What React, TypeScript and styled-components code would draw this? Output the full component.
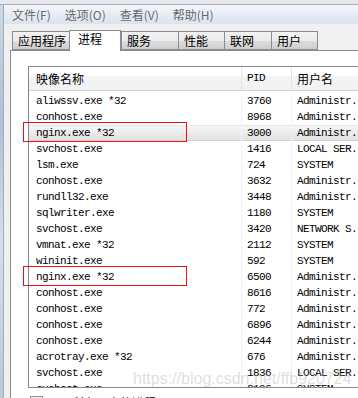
import React from "react";
import styled, { createGlobalStyle } from "styled-components";

interface IProcess {
  name: string;
  pid: string;
  user: string;
  selected?: boolean;
}

const processes: IProcess[] = [
  { name: "aliwssv.exe *32", pid: "3760", user: "Administr." },
  { name: "conhost.exe", pid: "8968", user: "Administr." },
  { name: "nginx.exe *32", pid: "3000", user: "Administr.", selected: true },
  { name: "svchost.exe", pid: "1416", user: "LOCAL SER." },
  { name: "lsm.exe", pid: "724", user: "SYSTEM" },
  { name: "conhost.exe", pid: "3632", user: "Administr." },
  { name: "rundll32.exe", pid: "3448", user: "Administr." },
  { name: "sqlwriter.exe", pid: "1180", user: "SYSTEM" },
  { name: "svchost.exe", pid: "3420", user: "NETWORK S." },
  { name: "vmnat.exe *32", pid: "2112", user: "SYSTEM" },
  { name: "wininit.exe", pid: "592", user: "SYSTEM" },
  { name: "nginx.exe *32", pid: "6500", user: "Administr." },
  { name: "conhost.exe", pid: "8616", user: "Administr." },
  { name: "conhost.exe", pid: "772", user: "Administr." },
  { name: "conhost.exe", pid: "6896", user: "Administr." },
  { name: "conhost.exe", pid: "6244", user: "Administr." },
  { name: "acrotray.exe *32", pid: "676", user: "Administr." },
  { name: "svchost.exe", pid: "1836", user: "LOCAL SER." },
  { name: "svchost.exe", pid: "2196", user: "SYSTEM" },
];

const tabs = [
  { label: "应用程序", width: 58 },
  { label: "进程", width: 52, active: true },
  { label: "服务", width: 58 },
  { label: "性能", width: 47 },
  { label: "联网", width: 48 },
  { label: "用户", width: 47 },
];

const menus = ["文件(F)", "选项(O)", "查看(V)", "帮助(H)"];

const GlobalStyle = createGlobalStyle`
  html, body {
    margin: 0;
    padding: 0;
    overflow: hidden;
    background: #f0f0f0;
  }
`;

const Window = styled.div`
  position: relative;
  width: 358px;
  height: 398px;
  overflow: hidden;
  display: flex;
  flex-direction: column;
  font-family: "Noto Sans CJK SC", "Liberation Sans", sans-serif;
`;

const TopStrip = styled.div`
  height: 4px;
  flex-shrink: 0;
  background: #e6e8eb;
  border-bottom: 1px solid #a9adb3;
`;

const Body = styled.div`
  flex: 1;
  display: flex;
  flex-direction: row;
  min-height: 0;
`;

const Frame = styled.div`
  width: 3px;
  flex-shrink: 0;
  background: linear-gradient(180deg, #cbd8e8 0%, #aebfd6 30%, #d5dfec 60%, #b9c8dc 100%);
  border-right: 1px solid #a7abb0;
`;

const Content = styled.div`
  flex: 1;
  display: flex;
  flex-direction: column;
  background: #f0f0f0;
  min-width: 0;
`;

const MenuBar = styled.div`
  height: 19px;
  flex-shrink: 0;
  display: flex;
  align-items: center;
  padding-left: 1px;
  background: linear-gradient(180deg, #f4f7fb 0%, #e6ecf5 50%, #dbe3ef 100%);
`;

const MenuItem = styled.span`
  padding: 0 7px;
  font-size: 12px;
  line-height: 19px;
  color: #6a6a6a;
`;

const TabRow = styled.div`
  display: flex;
  align-items: flex-end;
  height: 21px;
  margin-top: 5px;
  padding-left: 8px;
  position: relative;
  z-index: 1;
`;

const Tab = styled.div<{ $active?: boolean; $width: number }>`
  box-sizing: border-box;
  width: ${(p) => p.$width}px;
  height: ${(p) => (p.$active ? 21 : 19)}px;
  margin-bottom: ${(p) => (p.$active ? -1 : 0)}px;
  margin-right: ${(p) => (p.$active ? 0 : -1)}px;
  padding-left: ${(p) => (p.$active ? 8 : 5)}px;
  border: 1px solid #898c95;
  border-bottom: ${(p) => (p.$active ? "none" : "1px solid #898c95")};
  background: ${(p) =>
    p.$active ? "#ffffff" : "linear-gradient(180deg, #f2f2f2 0%, #ebebeb 50%, #dddddd 51%, #cfcfcf 100%)"};
  font-size: 12px;
  line-height: ${(p) => (p.$active ? 16 : 18)}px;
  color: #000;
  white-space: nowrap;
`;

const Panel = styled.div`
  flex: 1;
  margin-left: 6px;
  background: #ffffff;
  border-left: 1px solid #898c95;
  border-top: 1px solid #898c95;
  padding: 15px 0 0 17px;
  display: flex;
  flex-direction: column;
  min-height: 0;
`;

const ListView = styled.div`
  width: 340px;
  height: 322px;
  box-sizing: border-box;
  border: 1px solid #828790;
  border-right: none;
  display: flex;
  flex-direction: column;
  overflow: hidden;
  flex-shrink: 0;
`;

const HeaderRow = styled.div`
  display: flex;
  height: 23px;
  flex-shrink: 0;
  border-bottom: 1px solid #d5d5d5;
  background: linear-gradient(180deg, #ffffff 0%, #ffffff 40%, #f3f4f6 41%, #f0f1f3 100%);
`;

const HeaderCell = styled.div<{ $width?: number; $pad: number; $mono?: boolean }>`
  box-sizing: border-box;
  width: ${(p) => (p.$width ? `${p.$width}px` : "auto")};
  flex: ${(p) => (p.$width ? "none" : "1")};
  padding-left: ${(p) => p.$pad}px;
  border-right: ${(p) => (p.$width ? "1px solid #e2e3ea" : "none")};
  font-family: ${(p) =>
    p.$mono ? '"Liberation Mono", monospace' : '"Noto Sans CJK SC", sans-serif'};
  font-size: ${(p) => (p.$mono ? 11 : 12)}px;
  letter-spacing: ${(p) => (p.$mono ? "-0.6px" : "0")};
  line-height: 23px;
  color: #000;
`;

const Rows = styled.div`
  padding-top: 2px;
  flex: 1;
  overflow: hidden;
`;

const Row = styled.div<{ $selected?: boolean }>`
  display: flex;
  height: 16px;
  background: ${(p) => (p.$selected ? "linear-gradient(180deg, #f7f7f7 0%, #ececec 50%, #e0e0e0 100%)" : "transparent")};
  box-shadow: ${(p) => (p.$selected ? "inset 0 1px 0 #e6e6e6, inset 0 -1px 0 #d2d2d2" : "none")};
`;

const Cell = styled.div<{ $width?: number; $pad: number }>`
  box-sizing: border-box;
  width: ${(p) => (p.$width ? `${p.$width}px` : "auto")};
  flex: ${(p) => (p.$width ? "none" : "1")};
  padding-left: ${(p) => p.$pad}px;
  border-right: ${(p) => (p.$width ? "1px solid #eef1f7" : "none")};
  font-family: "Liberation Mono", "DejaVu Sans Mono", monospace;
  font-size: 11px;
  letter-spacing: -0.6px;
  line-height: 17px;
  color: #000;
  white-space: nowrap;
  overflow: hidden;
`;

const OptionRow = styled.div`
  display: flex;
  align-items: flex-start;
  gap: 5px;
  margin-top: 8px;
  margin-left: 2px;
`;

const CheckBox = styled.div`
  width: 11px;
  height: 11px;
  flex-shrink: 0;
  border: 1px solid #8e8f8f;
  background: linear-gradient(135deg, #dcdcdc 0%, #f6f6f6 100%);
  box-shadow: inset 0 0 0 1px #f4f4f4;
`;

const OptionText = styled.span`
  font-size: 12px;
  line-height: 13px;
  color: #000;
`;

const Highlight = styled.div<{ $top: number }>`
  position: absolute;
  left: 23px;
  top: ${(p) => p.$top}px;
  width: 164px;
  height: 20px;
  box-sizing: border-box;
  border: 1px solid #ee1111;
  pointer-events: none;
`;

const Watermark = styled.div`
  position: absolute;
  left: 133px;
  top: 370px;
  font-family: "Liberation Sans", Arial, sans-serif;
  font-size: 16px;
  color: rgba(175, 175, 175, 0.42);
  white-space: nowrap;
  pointer-events: none;
`;

const App = () => {
  return (
    <>
      <GlobalStyle />
      <Window>
        <TopStrip />
        <Body>
          <Frame />
          <Content>
            <MenuBar>
              {menus.map((m) => (
                <MenuItem key={m}>{m}</MenuItem>
              ))}
            </MenuBar>
            <TabRow>
              {tabs.map((t) => (
                <Tab key={t.label} $active={t.active} $width={t.width}>
                  {t.label}
                </Tab>
              ))}
            </TabRow>
            <Panel>
              <ListView>
                <HeaderRow>
                  <HeaderCell $width={213} $pad={7}>映像名称</HeaderCell>
                  <HeaderCell $width={50} $pad={5} $mono>PID</HeaderCell>
                  <HeaderCell $pad={5}>用户名</HeaderCell>
                </HeaderRow>
                <Rows>
                  {processes.map((p, i) => (
                    <Row key={i} $selected={p.selected}>
                      <Cell $width={213} $pad={7}>{p.name}</Cell>
                      <Cell $width={50} $pad={5}>{p.pid}</Cell>
                      <Cell $pad={5}>{p.user}</Cell>
                    </Row>
                  ))}
                </Rows>
              </ListView>
              <OptionRow>
                <CheckBox />
                <OptionText>显示所有用户的进程(S)</OptionText>
              </OptionRow>
            </Panel>
          </Content>
        </Body>
        <Highlight $top={122} />
        <Highlight $top={266} />
        <Watermark>https://blog.csdn.net/ffb920724</Watermark>
      </Window>
    </>
  );
};

export default App;
